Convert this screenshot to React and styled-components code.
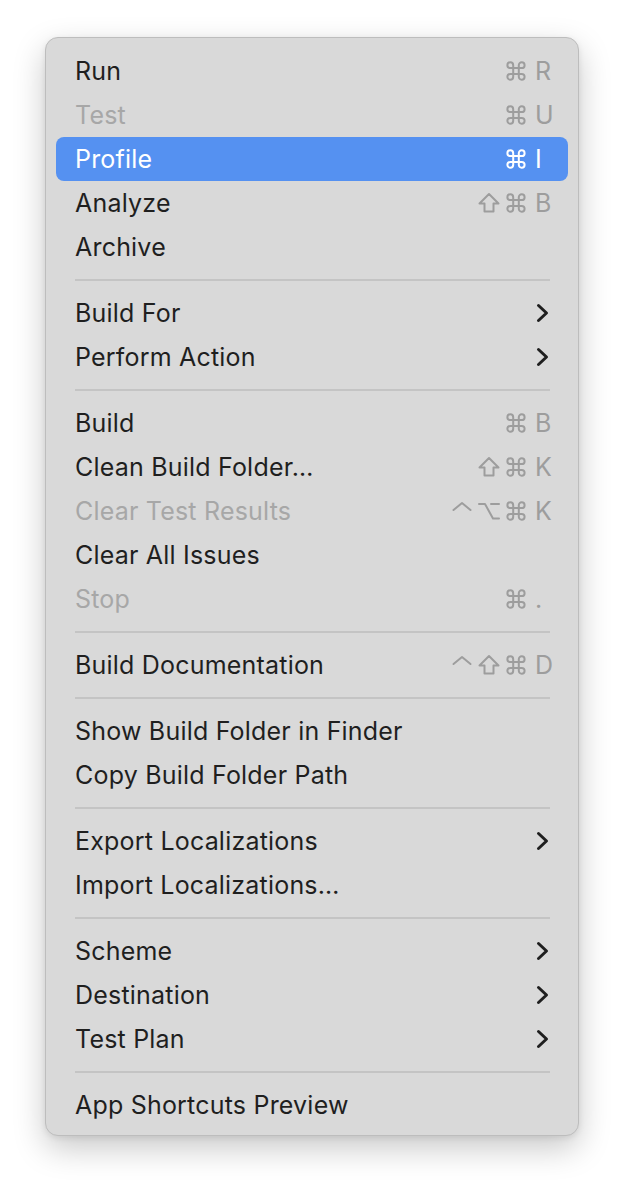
import React from 'react';
import styled, { createGlobalStyle } from 'styled-components';

const GlobalStyle = createGlobalStyle`
    html, body {
        margin: 0;
        background: #ffffff;
    }
    body {
        font-family: Inter, "Liberation Sans", sans-serif;
        -webkit-font-smoothing: antialiased;
    }
`;

const Page = styled.div`
    width: 624px;
    height: 1190px;
    padding: 37px 0 0 45px;
    box-sizing: border-box;
`;

const Menu = styled.div`
    width: 534px;
    box-sizing: border-box;
    background: #d9d9d9;
    border: 1px solid #bdbdbd;
    border-radius: 13px;
    padding: 11px 10px 8px 10px;
    display: flex;
    flex-direction: column;
    box-shadow: 0 12px 32px rgba(0, 0, 0, 0.22), 0 2px 6px rgba(0, 0, 0, 0.08);
`;

const Row = styled.div`
    height: 44px;
    display: flex;
    align-items: center;
    justify-content: space-between;
    padding: 0 16px 0 19px;
    border-radius: 8px;
    font-size: 25px;
    letter-spacing: 0.2px;
    color: ${p => p.$active ? '#ffffff' : p.$disabled ? '#a7a7a7' : '#1f1f1f'};
    background: ${p => p.$active ? '#5591f1' : 'transparent'};
`;

const Separator = styled.div`
    height: 22px;
    display: flex;
    align-items: center;
    padding: 0 18px 0 19px;

    &::after {
        content: '';
        flex: 1;
        height: 2px;
        background: #c4c4c4;
    }
`;

const Shortcut = styled.div`
    display: flex;
    align-items: center;
    color: ${p => p.$active ? '#ffffff' : '#9d9d9d'};
`;

const Mod = styled.span`
    width: 27px;
    height: 22px;
    display: flex;
    align-items: center;
    justify-content: center;
`;

const Key = styled.span`
    width: 17px;
    margin-left: 6px;
    font-size: 25px;
    letter-spacing: 0;
`;

// modifier glyphs drawn in a 22x22 box
const modPaths = {
    cmd: <path d="M13.8 5.2v11.6a2.9 2.9 0 1 0 2.9-2.9H5.3a2.9 2.9 0 1 0 2.9 2.9V5.2a2.9 2.9 0 1 0-2.9 2.9h11.4a2.9 2.9 0 1 0-2.9-2.9" />,
    shift: <path d="M11 2 L20.5 11.5 H15.5 V19.5 H6.5 V11.5 H1.5 Z" />,
    ctrl: <polyline points="2.5,10 11,3 19.5,10" />,
    opt: <>
        <polyline points="1,4 7,4 15,18.5 21,18.5" />
        <line x1="13" y1="4" x2="21" y2="4" />
    </>,
};

const ModIcon = ({ name }) => (
    <svg width="22" height="22" viewBox="0 0 22 22" fill="none" stroke="currentColor" strokeWidth="2" strokeLinecap="round" strokeLinejoin="round">
        {modPaths[name]}
    </svg>
);

const Chevron = () => (
    <svg width="14" height="20" viewBox="0 0 14 20" style={{ marginRight: 2 }}>
        <polyline points="2.5,2.5 10.5,10 2.5,17.5" fill="none" stroke="#1f1f1f" strokeWidth="3" strokeLinecap="round" strokeLinejoin="round" />
    </svg>
);

const groups = [
    [
        { label: 'Run', mods: ['cmd'], key: 'R' },
        { label: 'Test', mods: ['cmd'], key: 'U', disabled: true },
        { label: 'Profile', mods: ['cmd'], key: 'I', active: true },
        { label: 'Analyze', mods: ['shift', 'cmd'], key: 'B' },
        { label: 'Archive' },
    ],
    [
        { label: 'Build For', submenu: true },
        { label: 'Perform Action', submenu: true },
    ],
    [
        { label: 'Build', mods: ['cmd'], key: 'B' },
        { label: 'Clean Build Folder…', mods: ['shift', 'cmd'], key: 'K' },
        { label: 'Clear Test Results', mods: ['ctrl', 'opt', 'cmd'], key: 'K', disabled: true },
        { label: 'Clear All Issues' },
        { label: 'Stop', mods: ['cmd'], key: '.', disabled: true },
    ],
    [
        { label: 'Build Documentation', mods: ['ctrl', 'shift', 'cmd'], key: 'D' },
    ],
    [
        { label: 'Show Build Folder in Finder' },
        { label: 'Copy Build Folder Path' },
    ],
    [
        { label: 'Export Localizations', submenu: true },
        { label: 'Import Localizations…' },
    ],
    [
        { label: 'Scheme', submenu: true },
        { label: 'Destination', submenu: true },
        { label: 'Test Plan', submenu: true },
    ],
    [
        { label: 'App Shortcuts Preview' },
    ],
];

const MenuRow = ({ item }) => (
    <Row $active={item.active} $disabled={item.disabled}>
        <span>{item.label}</span>
        {item.key && (
            <Shortcut $active={item.active}>
                {item.mods.map((m, i) => <Mod key={i}><ModIcon name={m} /></Mod>)}
                <Key>{item.key}</Key>
            </Shortcut>
        )}
        {item.submenu && <Chevron />}
    </Row>
);

const App = () => {
    return (
        <>
            <GlobalStyle />
            <Page>
                <Menu>
                    {groups.map((group, gi) => (
                        <React.Fragment key={gi}>
                            {gi > 0 && <Separator />}
                            {group.map(item => <MenuRow key={item.label} item={item} />)}
                        </React.Fragment>
                    ))}
                </Menu>
            </Page>
        </>
    );
};

export default App;
